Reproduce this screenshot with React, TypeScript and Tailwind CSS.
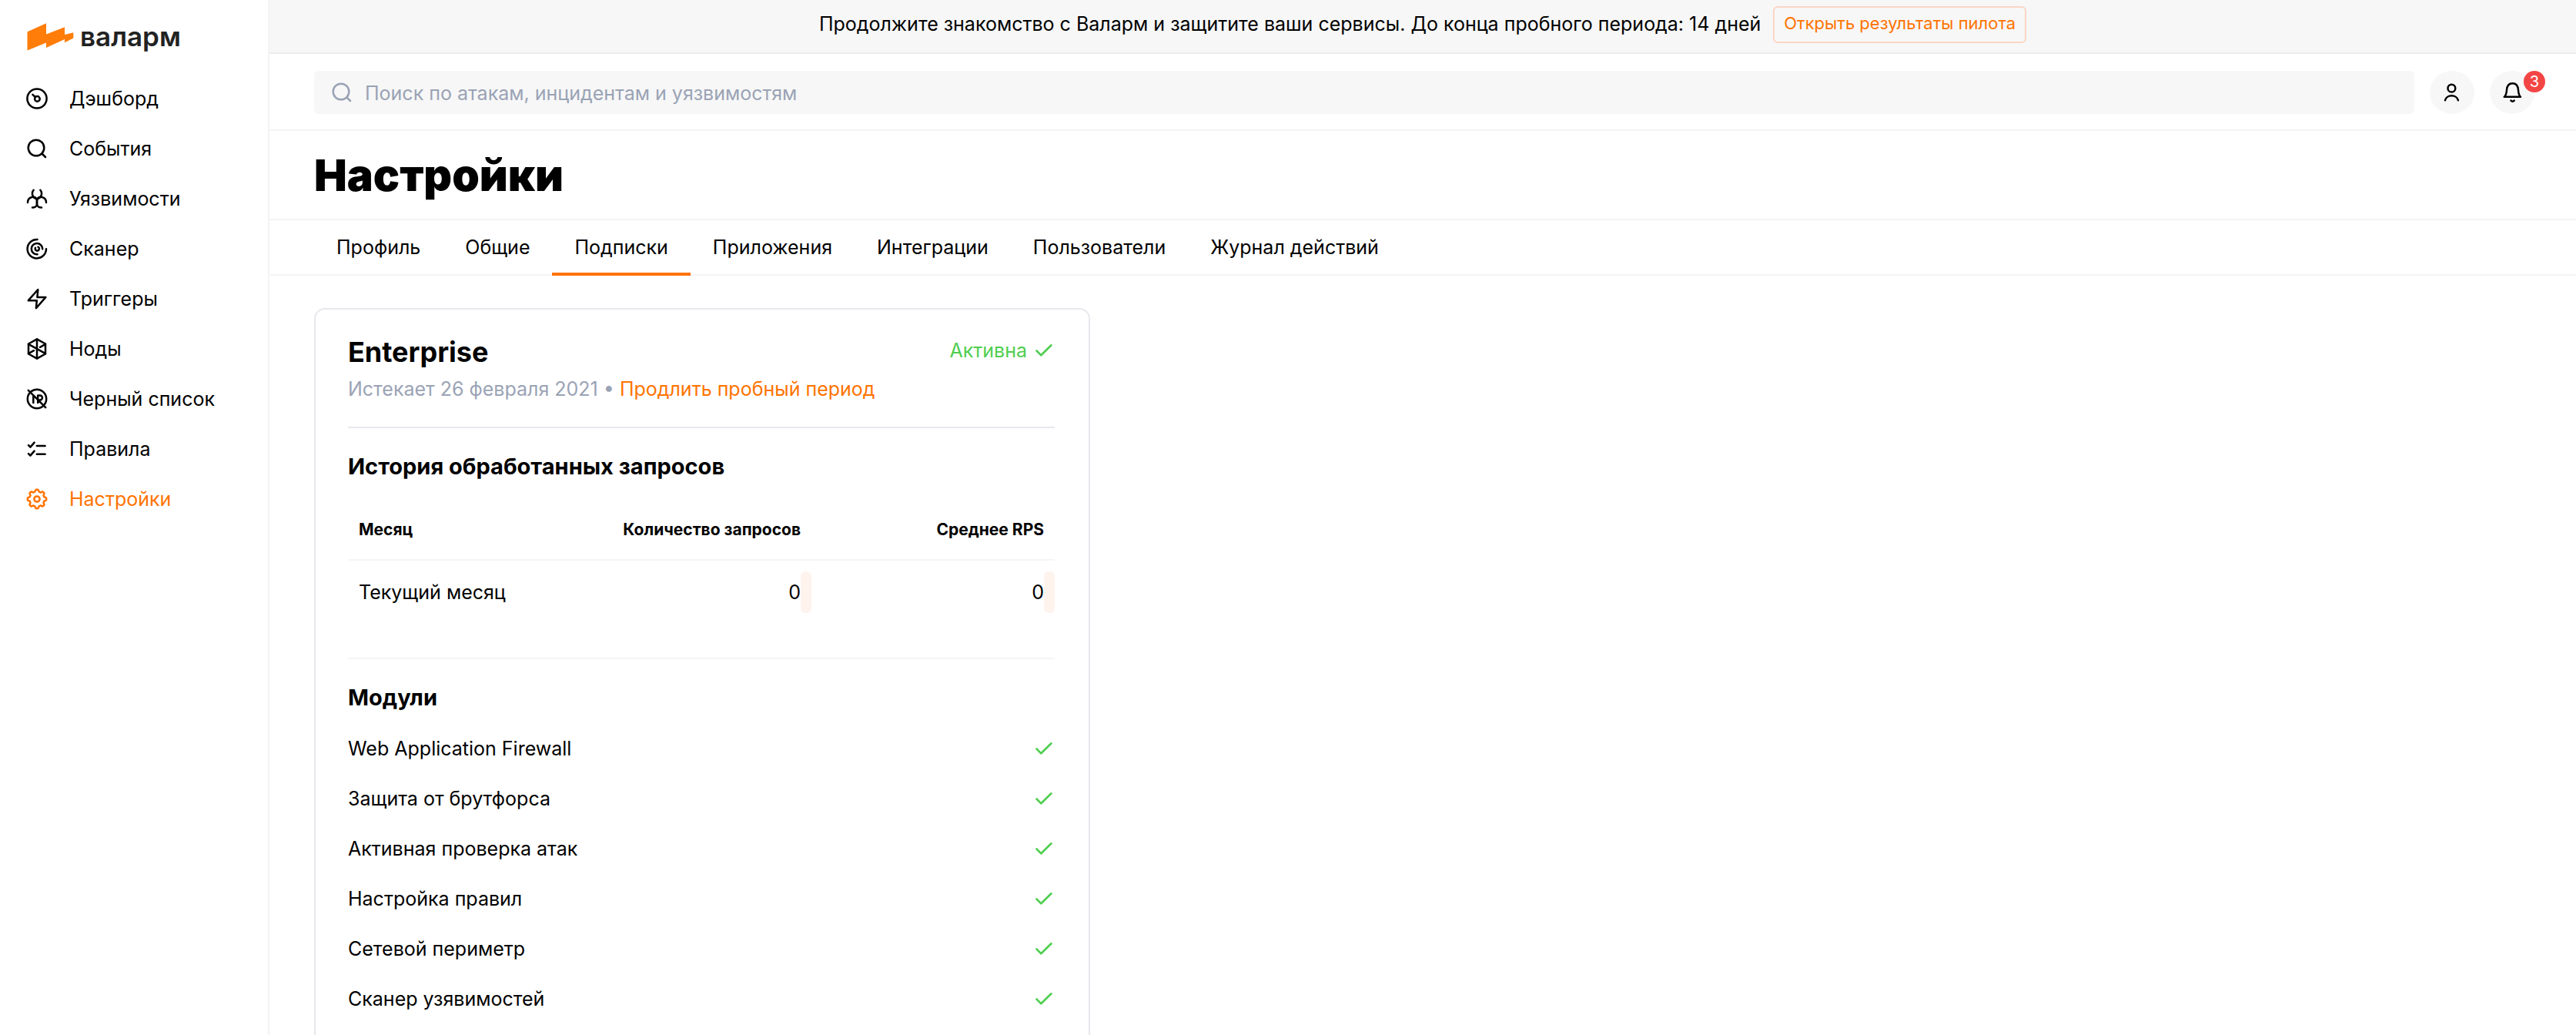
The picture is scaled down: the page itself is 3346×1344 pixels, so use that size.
import React from "react";

type IconProps = { children: React.ReactNode };

function Icon({ children }: IconProps) {
  return (
    <svg
      viewBox="0 0 28 28"
      className="h-7 w-7 shrink-0"
      fill="none"
      stroke="currentColor"
      strokeWidth={2.5}
      strokeLinecap="round"
      strokeLinejoin="round"
      aria-hidden="true"
    >
      {children}
    </svg>
  );
}

// Outline of an eight-toothed cog centred in the 28-unit box.
const cogPoints = Array.from({ length: 8 }, (_, i) =>
  [
    [-17, 9.7],
    [-6, 12.2],
    [6, 12.2],
    [17, 9.7],
  ].map(([offset, radius]) => {
    const angle = ((i * 45 + offset) * Math.PI) / 180;
    return `${(14 + radius * Math.sin(angle)).toFixed(2)},${(14 - radius * Math.cos(angle)).toFixed(2)}`;
  }),
)
  .flat()
  .join(" ");

const navItems = [
  {
    label: "Дэшборд",
    icon: (
      <Icon>
        <circle cx="14" cy="14" r="12.6" />
        <circle cx="14.4" cy="14.4" r="3.3" />
        <path d="M8.4 8.8l3.4 3.2" />
      </Icon>
    ),
  },
  {
    label: "События",
    icon: (
      <Icon>
        <circle cx="13" cy="13" r="10.3" />
        <path d="M20.5 20.5l4.5 4.5" />
      </Icon>
    ),
  },
  {
    label: "Уязвимости",
    icon: (
      <Icon>
        <path d="M9.6 2.8C6.4 7 8 13 14 14.6C20 13 21.6 7 18.4 2.8" />
        <path d="M2 19C2 10.5 13 9.8 14 15.5V20.5C14 23.5 11.5 25.6 8 25.6" />
        <path d="M26 19C26 10.5 15 9.8 14 15.5V20.5C14 23.5 16.5 25.6 20 25.6" />
      </Icon>
    ),
  },
  {
    label: "Сканер",
    icon: (
      <Icon>
        <path d="M14.5 2A12.2 12.2 0 1 0 26 14.2" />
        <path d="M14.5 21.3A7.2 7.2 0 1 1 21.2 14.2" />
        <path d="M15.5 11.7A2.6 2.6 0 1 1 12 12.8" />
      </Icon>
    ),
  },
  {
    label: "Триггеры",
    icon: (
      <Icon>
        <path d="M15.3 2L2.8 16.2H13.8L12.9 26.2L25.4 11.9H14.4Z" />
      </Icon>
    ),
  },
  {
    label: "Ноды",
    icon: (
      <Icon>
        <path d="M14 1.4L25 7.5V20.5L14 26.6L3 20.5V7.5Z" />
        <path d="M14 1.4V26.6M3 7.8L25 20.2M25 7.8L18 11.8M3 20.2L10 16.2" />
      </Icon>
    ),
  },
  {
    label: "Черный список",
    icon: (
      <Icon>
        <circle cx="14" cy="14" r="12.2" />
        <path d="M9.3 10V19M15.2 19V9.5H18A2.9 2.9 0 0 1 18 15.4H15.2M2.8 2.8L25.2 25.2" />
      </Icon>
    ),
  },
  {
    label: "Правила",
    icon: (
      <Icon>
        <path d="M3 9.2L5.4 11.6L10.6 5.6M3 20.2L5.4 22.6L10.6 16.6M13.8 10H24.6M13.8 20.8H24.6" />
      </Icon>
    ),
  },
  {
    label: "Настройки",
    active: true,
    icon: (
      <Icon>
        <polygon points={cogPoints} />
        <circle cx="14" cy="14" r="3.6" />
      </Icon>
    ),
  },
];

const tabs = ["Профиль", "Общие", "Подписки", "Приложения", "Интеграции", "Пользователи", "Журнал действий"];

const modules = [
  "Web Application Firewall",
  "Защита от брутфорса",
  "Активная проверка атак",
  "Настройка правил",
  "Сетевой периметр",
  "Сканер узявимостей",
];

function Check() {
  return (
    <svg
      viewBox="0 0 28 28"
      className="h-7 w-7 shrink-0 text-[#4fce50]"
      fill="none"
      stroke="currentColor"
      strokeWidth={2.6}
      strokeLinecap="round"
      strokeLinejoin="round"
      aria-hidden="true"
    >
      <path d="M4.5 14.5L10.3 20.3L23.5 7.3" />
    </svg>
  );
}

function Sidebar() {
  return (
    <aside className="w-[350px] shrink-0 border-r-2 border-[#f4f4f4]">
      <a href="#" className="flex h-[95px] items-center gap-2 pl-[35px]">
        <svg viewBox="0 0 61 36" className="h-9 w-[61px]" fill="#ff7d08" aria-hidden="true">
          <path d="M0.5 11.3L25 0.2V14.5L49 5.3V15L60.3 12.3V19.5L49 25.3V21L25 32V25.5L0.5 35.5Z" />
        </svg>
        <span className="text-[35px] leading-none font-semibold text-[#222222]">валарм</span>
      </a>
      <nav>
        <ul>
          {navItems.map((item) => (
            <li key={item.label}>
              <a
                href="#"
                className={
                  item.active
                    ? "flex h-[65px] items-center gap-7 pl-[34px] text-[#ff7300]"
                    : "flex h-[65px] items-center gap-7 pl-[34px]"
                }
              >
                {item.icon}
                {item.label}
              </a>
            </li>
          ))}
        </ul>
      </nav>
    </aside>
  );
}

function Header() {
  return (
    <div className="flex items-center gap-5 border-b-2 border-[#f4f4f4] pt-[22px] pr-[54px] pb-5 pl-[58px]">
      <label className="flex h-14 min-w-0 flex-1 items-center gap-4 rounded-md bg-[#f7f7f7] pl-[22px]">
        <svg
          viewBox="0 0 28 28"
          className="h-7 w-7 shrink-0 text-[#9aa3b5]"
          fill="none"
          stroke="currentColor"
          strokeWidth={2.5}
          strokeLinecap="round"
          aria-hidden="true"
        >
          <circle cx="13" cy="13" r="10.3" />
          <path d="M20.5 20.5l4.5 4.5" />
        </svg>
        <input
          type="text"
          aria-label="Поиск"
          placeholder="Поиск по атакам, инцидентам и уязвимостям"
          className="h-full min-w-0 flex-1 bg-transparent pt-[2px] outline-none placeholder:text-[#9aa3b5]"
        />
      </label>
      <button
        type="button"
        aria-label="Профиль"
        className="flex h-14 w-[58px] items-center justify-center rounded-[50%] bg-[#f7f7f7]"
      >
        <Icon>
          <circle cx="13.4" cy="8.7" r="4.9" />
          <path d="M5 24.2A8.6 7.2 0 0 1 21.9 24.2" />
        </Icon>
      </button>
      <button
        type="button"
        aria-label="Уведомления"
        className="relative flex h-14 w-[58px] items-center justify-center rounded-[50%] bg-[#f7f7f7]"
      >
        <Icon>
          <path d="M3.8 19.8H25C22.8 17.8 22.3 15.5 22 11C21.7 5.5 19 2.2 14.6 2.2C10.2 2.2 7.3 5.5 7 11C6.7 15.5 6 17.8 3.8 19.8Z" />
          <path d="M12.5 24.7Q14.6 26.7 16.7 24.7" />
        </Icon>
        <span className="absolute top-0 -right-[14px] flex h-7 w-7 items-center justify-center rounded-full bg-[#f44545] text-[20px] leading-none text-white">
          3
        </span>
      </button>
    </div>
  );
}

function SubscriptionCard() {
  return (
    <section className="w-full max-w-[1008px] rounded-[14px] border-2 border-[#e8e8ed] pt-[34px] pr-[44px] pb-24 pl-[42px]">
      <div className="flex items-start justify-between">
        <h2 className="text-[36px] leading-[42px] font-bold">Enterprise</h2>
        <p className="flex items-center gap-2 leading-[38px] text-[#4fce50]">
          Активна
          <Check />
        </p>
      </div>
      <p className="mt-2 border-b-2 border-[#e8e8ed] pb-[30px] leading-[38px] text-[#9aa3b5]">
        Истекает 26 февраля 2021 •{" "}
        <a href="#" className="text-[#ff7300]">
          Продлить пробный период
        </a>
      </p>

      <h3 className="mt-[30px] text-[29px] leading-10 font-bold">История обработанных запросов</h3>
      <div className="border-b-2 border-[#f5f5f5] pb-[44px]">
        <table className="mt-6 w-full table-fixed border-separate border-spacing-0">
          <thead>
            <tr className="text-[21px]">
              <th scope="col" className="h-[78px] border-b-2 border-[#f5f5f5] pl-[14px] text-left font-bold">
                Месяц
              </th>
              <th scope="col" className="w-[316px] border-b-2 border-[#f5f5f5] pr-[14px] text-right font-bold">
                Количество запросов
              </th>
              <th scope="col" className="w-[316px] border-b-2 border-[#f5f5f5] pr-[14px] text-right font-bold">
                Среднее RPS
              </th>
            </tr>
          </thead>
          <tbody>
            <tr>
              <td className="h-[82px] pl-[14px]">Текущий месяц</td>
              {["0", "0"].map((value, i) => (
                <td key={i}>
                  <div className="flex items-center justify-end">
                    {value}
                    <span className="h-[54px] w-[14px] rounded-md bg-[#fff3ee]" />
                  </div>
                </td>
              ))}
            </tr>
          </tbody>
        </table>
      </div>

      <h3 className="mt-[30px] text-[29px] leading-10 font-bold">Модули</h3>
      <ul className="mt-[13px]">
        {modules.map((name) => (
          <li key={name} className="flex h-[65px] items-center justify-between">
            {name}
            <Check />
          </li>
        ))}
      </ul>
    </section>
  );
}

export default function App() {
  return (
    <div className="flex h-screen overflow-hidden bg-white font-['Inter',sans-serif] text-[25px] leading-9 text-black">
      <Sidebar />
      <main className="min-w-0 flex-1">
        <div className="flex h-[70px] items-start justify-center gap-4 border-b-2 border-[#ececec] bg-[#f7f7f7] pt-2">
          <p className="leading-[46px]">
            Продолжите знакомство с Валарм и защитите ваши сервисы. До конца пробного периода: 14 дней
          </p>
          <button
            type="button"
            className="flex h-12 items-center rounded-md border-2 border-[#fbd5c4] px-3 pb-1 text-[22px] text-[#ff7300]"
          >
            Открыть результаты пилота
          </button>
        </div>
        <Header />
        <div className="flex h-[116px] items-center border-b-2 border-[#f4f4f4] pl-[58px]">
          <h1 className="text-[57px] leading-none font-black">Настройки</h1>
        </div>
        <nav className="flex h-[72px] border-b-2 border-[#f4f4f4] pl-[58px]">
          {tabs.map((tab) => (
            <a
              key={tab}
              href="#"
              className={
                tab === "Подписки"
                  ? "-mb-[2px] flex items-center border-b-4 border-[#ff7300] px-[29px] pt-[2px]"
                  : "-mb-[2px] flex items-center border-b-4 border-transparent px-[29px] pt-[2px]"
              }
            >
              {tab}
            </a>
          ))}
        </nav>
        <div className="px-[58px] pt-[42px]">
          <SubscriptionCard />
        </div>
      </main>
    </div>
  );
}
